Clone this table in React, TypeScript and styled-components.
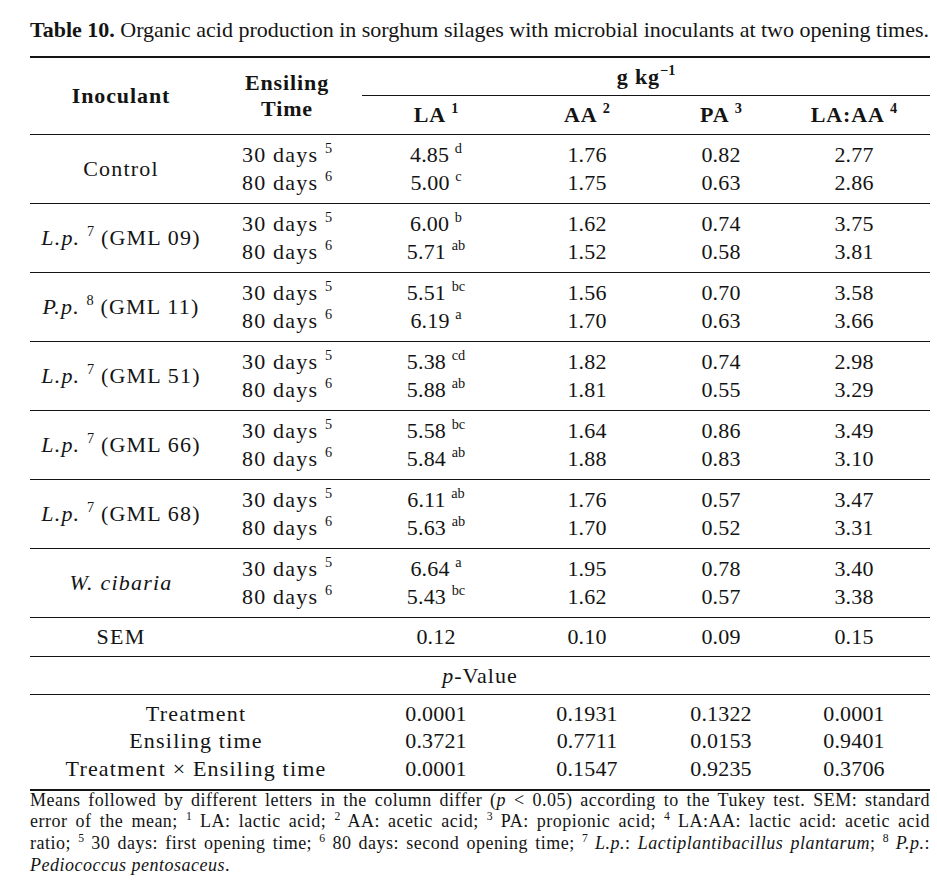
import React from 'react';
import styled, { createGlobalStyle } from 'styled-components';

const GlobalStyle = createGlobalStyle`
  html, body { margin: 0; padding: 0; background: #fff; }
  body { font-family: "Liberation Serif", "Times New Roman", serif; color: #141414; }
`;

const COLS = '182px 150px 148px 154px 114px 152px';

const Page = styled.div`
  width: 900px;
  padding: 15px 0 0 30px;
`;

const Caption = styled.div`
  font-size: 22px;
  line-height: 30px;
  white-space: nowrap;
  margin-bottom: 11px;
`;

const CaptionLabel = styled.b`
  font-weight: bold;
`;

const TableBox = styled.div`
  border-top: 2px solid #141414;
  border-bottom: 2px solid #141414;
  font-size: 22px;
`;

const Head = styled.div`
  display: grid;
  grid-template-columns: ${COLS};
  grid-template-rows: 38px 38px;
  font-weight: bold;
`;

const HeadCell = styled.div<{ $col: string; $row: string; $rule?: boolean; $lh?: number }>`
  grid-column: ${(p) => p.$col};
  grid-row: ${(p) => p.$row};
  display: flex;
  align-items: center;
  justify-content: center;
  text-align: center;
  letter-spacing: 0.9px;
  line-height: ${(p) => p.$lh ?? 28}px;
  border-bottom: ${(p) => (p.$rule ? '1px solid #141414' : 'none')};
`;

const Group = styled.div`
  display: grid;
  grid-template-columns: ${COLS};
  grid-auto-rows: 28px;
  padding: 6px 0 6px;
  border-top: 1px solid #141414;
`;

const SingleRow = styled.div`
  display: grid;
  grid-template-columns: ${COLS};
  grid-auto-rows: 28px;
  padding: 5px 0 5px;
  border-top: 1px solid #141414;
`;

const Cell = styled.div<{ $span?: number; $rows?: number; $label?: boolean }>`
  grid-column: span ${(p) => p.$span ?? 1};
  grid-row: span ${(p) => p.$rows ?? 1};
  align-self: center;
  text-align: center;
  line-height: 28px;
  white-space: nowrap;
  letter-spacing: ${(p) => (p.$label ? '1.2px' : '0.15px')};
`;

const Banner = styled.div`
  border-top: 1px solid #141414;
  height: 37px;
  line-height: 38px;
  text-align: center;
  letter-spacing: 1px;
`;

const PBlock = styled.div`
  display: grid;
  grid-template-columns: ${COLS};
  grid-auto-rows: 27.5px;
  padding: 5px 0 6px;
  border-top: 1px solid #141414;
`;

const Sup = styled.sup`
  font-size: 0.65em;
  line-height: 0;
  letter-spacing: 0;
  vertical-align: baseline;
  position: relative;
  top: -0.62em;
`;

const Notes = styled.div`
  font-size: 18px;
  line-height: 21.7px;
  letter-spacing: 0.5px;
  margin-top: -1px;
`;

const NoteLine = styled.span<{ $last?: boolean }>`
  display: block;
  text-align: justify;
  text-align-last: ${(p) => (p.$last ? 'left' : 'justify')};
  white-space: ${(p) => (p.$last ? 'nowrap' : 'normal')};
`;

type Row = { days: string; dsup: string; la: string; lsup: string; aa: string; pa: string; ratio: string };
type GroupData = { name: React.ReactNode; rows: Row[] };

const r = (days: string, dsup: string, la: string, lsup: string, aa: string, pa: string, ratio: string): Row => ({
  days, dsup, la, lsup, aa, pa, ratio,
});

const groups: GroupData[] = [
  { name: 'Control', rows: [r('30 days', '5', '4.85', 'd', '1.76', '0.82', '2.77'), r('80 days', '6', '5.00', 'c', '1.75', '0.63', '2.86')] },
  { name: <><i>L.p.</i> <Sup>7</Sup> (GML 09)</>, rows: [r('30 days', '5', '6.00', 'b', '1.62', '0.74', '3.75'), r('80 days', '6', '5.71', 'ab', '1.52', '0.58', '3.81')] },
  { name: <><i>P.p.</i> <Sup>8</Sup> (GML 11)</>, rows: [r('30 days', '5', '5.51', 'bc', '1.56', '0.70', '3.58'), r('80 days', '6', '6.19', 'a', '1.70', '0.63', '3.66')] },
  { name: <><i>L.p.</i> <Sup>7</Sup> (GML 51)</>, rows: [r('30 days', '5', '5.38', 'cd', '1.82', '0.74', '2.98'), r('80 days', '6', '5.88', 'ab', '1.81', '0.55', '3.29')] },
  { name: <><i>L.p.</i> <Sup>7</Sup> (GML 66)</>, rows: [r('30 days', '5', '5.58', 'bc', '1.64', '0.86', '3.49'), r('80 days', '6', '5.84', 'ab', '1.88', '0.83', '3.10')] },
  { name: <><i>L.p.</i> <Sup>7</Sup> (GML 68)</>, rows: [r('30 days', '5', '6.11', 'ab', '1.76', '0.57', '3.47'), r('80 days', '6', '5.63', 'ab', '1.70', '0.52', '3.31')] },
  { name: <i>W. cibaria</i>, rows: [r('30 days', '5', '6.64', 'a', '1.95', '0.78', '3.40'), r('80 days', '6', '5.43', 'bc', '1.62', '0.57', '3.38')] },
];

const pRows = [
  ['Treatment', '0.0001', '0.1931', '0.1322', '0.0001'],
  ['Ensiling time', '0.3721', '0.7711', '0.0153', '0.9401'],
  ['Treatment \u00d7 Ensiling time', '0.0001', '0.1547', '0.9235', '0.3706'],
];

export default function App() {
  return (
    <Page>
      <GlobalStyle />
      <Caption>
        <CaptionLabel>Table 10.</CaptionLabel> Organic acid production in sorghum silages with microbial inoculants at two opening times.
      </Caption>
      <TableBox>
        <Head>
          <HeadCell $col="1" $row="1 / 3">Inoculant</HeadCell>
          <HeadCell $col="2" $row="1 / 3" $lh={26}>Ensiling<br />Time</HeadCell>
          <HeadCell $col="3 / 7" $row="1" $rule>
            <span>g kg<Sup>{'\u22121'}</Sup></span>
          </HeadCell>
          <HeadCell $col="3" $row="2"><span>LA <Sup>1</Sup></span></HeadCell>
          <HeadCell $col="4" $row="2"><span>AA <Sup>2</Sup></span></HeadCell>
          <HeadCell $col="5" $row="2"><span>PA <Sup>3</Sup></span></HeadCell>
          <HeadCell $col="6" $row="2"><span>LA:AA <Sup>4</Sup></span></HeadCell>
        </Head>
        {groups.map((g, gi) => (
          <Group key={gi}>
            <Cell $rows={2} $label>{g.name}</Cell>
            {g.rows.map((row, ri) => (
              <React.Fragment key={ri}>
                <Cell $label>{row.days} <Sup>{row.dsup}</Sup></Cell>
                <Cell>{row.la} <Sup>{row.lsup}</Sup></Cell>
                <Cell>{row.aa}</Cell>
                <Cell>{row.pa}</Cell>
                <Cell>{row.ratio}</Cell>
              </React.Fragment>
            ))}
          </Group>
        ))}
        <SingleRow>
          <Cell $label>SEM</Cell>
          <Cell />
          <Cell>0.12</Cell>
          <Cell>0.10</Cell>
          <Cell>0.09</Cell>
          <Cell>0.15</Cell>
        </SingleRow>
        <Banner><i>p</i>-Value</Banner>
        <PBlock>
          {pRows.map((pr) => (
            <React.Fragment key={pr[0]}>
              <Cell $span={2} $label>{pr[0]}</Cell>
              <Cell>{pr[1]}</Cell>
              <Cell>{pr[2]}</Cell>
              <Cell>{pr[3]}</Cell>
              <Cell>{pr[4]}</Cell>
            </React.Fragment>
          ))}
        </PBlock>
      </TableBox>
      <Notes>
        <NoteLine>Means followed by different letters in the column differ (<i>p</i> &lt; 0.05) according to the Tukey test. SEM: standard</NoteLine>
        <NoteLine>error of the mean; <Sup>1</Sup> LA: lactic acid; <Sup>2</Sup> AA: acetic acid; <Sup>3</Sup> PA: propionic acid; <Sup>4</Sup> LA:AA: lactic acid: acetic acid</NoteLine>
        <NoteLine>ratio; <Sup>5</Sup> 30 days: first opening time; <Sup>6</Sup> 80 days: second opening time; <Sup>7</Sup> <i>L.p.</i>: <i>Lactiplantibacillus plantarum</i>; <Sup>8</Sup> <i>P.p.</i>:</NoteLine>
        <NoteLine $last><i>Pediococcus pentosaceus</i>.</NoteLine>
      </Notes>
    </Page>
  );
}
